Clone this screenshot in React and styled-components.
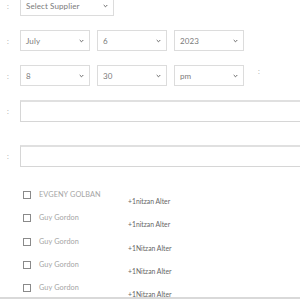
import React from "react";
import styled, { createGlobalStyle } from "styled-components";

const GlobalStyle = createGlobalStyle`
  html, body {
    margin: 0;
    padding: 0;
    background: #fff;
    overflow: hidden;
  }
  body {
    font-family: Lato, "Open Sans", sans-serif;
  }
`;

const Page = styled.div`
  width: 300px;
  height: 300px;
  overflow: hidden;
  position: relative;
`;

const Form = styled.div`
  margin-top: -5px;
  display: flex;
  flex-direction: column;
`;

const FieldRow = styled.div`
  display: flex;
  align-items: center;
  margin-bottom: ${(p) => p.gap || 14}px;
`;

const Colon = styled.span`
  width: 20px;
  padding-left: 7px;
  box-sizing: border-box;
  font-size: 7px;
  color: #aaa;
  flex-shrink: 0;
`;

const Selects = styled.div`
  display: flex;
  gap: 7px;
  align-items: flex-start;
`;

const SelectBox = styled.div`
  width: ${(p) => p.w}px;
  height: 21px;
  box-sizing: border-box;
  border: 1px solid #dcdcdc;
  display: flex;
  align-items: center;
  justify-content: space-between;
  padding: 0 5px;
  font-size: 8px;
  letter-spacing: 0.1px;
  color: #7a7a7a;
  background: #fff;
`;

const TrailColon = styled.span`
  font-size: 7px;
  color: #aaa;
  margin-left: 7px;
  margin-top: 2px;
`;

const TextBox = styled.div`
  flex: 1;
  height: 22px;
  box-sizing: border-box;
  border: 1px solid #d6d6d6;
  border-top: 2px solid #e0e0e0;
  margin-right: -20px;
`;

const List = styled.div`
  display: flex;
  flex-direction: column;
  padding-left: 23px;
  margin-top: 9px;
`;

const Item = styled.div`
  display: grid;
  grid-template-columns: 16px 89px auto;
  height: 23.3px;
`;

const Box = styled.span`
  width: 8px;
  height: 8px;
  box-sizing: border-box;
  border: 1px solid #8a8a8a;
  margin-top: 1px;
`;

const Name = styled.span`
  font-size: 7.3px;
  color: #a5a5a5;
  line-height: 10px;
  letter-spacing: 0.1px;
`;

const Assignee = styled.span`
  font-size: 6.8px;
  color: #666;
  line-height: 10px;
  margin-top: 6px;
`;

const BottomLine = styled.div`
  position: absolute;
  left: 0;
  right: 0;
  top: 297px;
  height: 2px;
  background: #d9d9d9;
`;

const Chevron = () => (
  <svg width="5" height="4" viewBox="0 0 5 4">
    <path d="M0.7 1 L2.5 2.8 L4.3 1" fill="none" stroke="#666" strokeWidth="1" />
  </svg>
);

const Select = ({ w, children }) => (
  <SelectBox w={w}>
    <span>{children}</span>
    <Chevron />
  </SelectBox>
);

const people = [
  { name: "EVGENY GOLBAN", who: "+1nitzan Alter" },
  { name: "Guy Gordon", who: "+1nitzan Alter" },
  { name: "Guy Gordon", who: "+1Nitzan Alter" },
  { name: "Guy Gordon", who: "+1Nitzan Alter" },
  { name: "Guy Gordon", who: "+1Nitzan Alter" },
];

export default function App() {
  return (
    <Page>
      <GlobalStyle />
      <Form>
        <FieldRow>
          <Colon>:</Colon>
          <Select w={94}>Select Supplier</Select>
        </FieldRow>
        <FieldRow>
          <Colon>:</Colon>
          <Selects>
            <Select w={70}>July</Select>
            <Select w={70}>6</Select>
            <Select w={70}>2023</Select>
          </Selects>
        </FieldRow>
        <FieldRow>
          <Colon>:</Colon>
          <Selects>
            <Select w={70}>8</Select>
            <Select w={70}>30</Select>
            <Select w={70}>pm</Select>
            <TrailColon>:</TrailColon>
          </Selects>
        </FieldRow>
        <FieldRow gap={23}>
          <Colon>:</Colon>
          <TextBox />
        </FieldRow>
        <FieldRow>
          <Colon>:</Colon>
          <TextBox />
        </FieldRow>
        <List>
          {people.map((p, i) => (
            <Item key={i}>
              <Box />
              <Name>{p.name}</Name>
              <Assignee>{p.who}</Assignee>
            </Item>
          ))}
        </List>
      </Form>
      <BottomLine />
    </Page>
  );
}
